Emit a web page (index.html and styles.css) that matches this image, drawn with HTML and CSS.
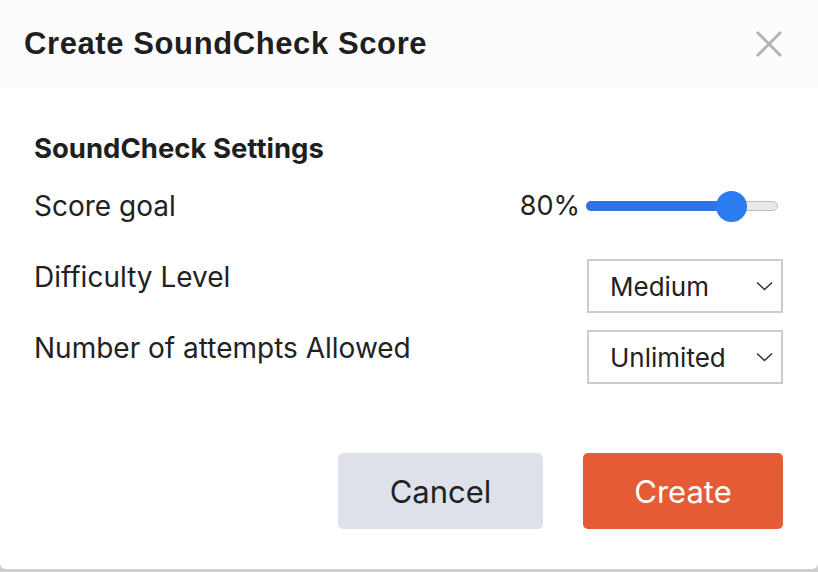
FILE: index.html
```html
<!DOCTYPE html>
<html lang="en">
<head>
<meta charset="utf-8">
<title>Create SoundCheck Score</title>
<link rel="stylesheet" href="styles.css">
</head>
<body>
<div class="dialog">
  <div class="header">
    <h1 class="title">Create SoundCheck Score</h1>
    <button class="close" aria-label="Close">
      <svg width="28" height="28" viewBox="0 0 28 28"><path d="M2 2 L26 26 M26 2 L2 26" stroke="#b3b3b3" stroke-width="3" fill="none"/></svg>
    </button>
  </div>
  <div class="content">
    <h2 class="section-title">SoundCheck Settings</h2>
    <div class="row row-slider">
      <span class="label">Score goal</span>
      <div class="slider-wrap">
        <span class="value">80%</span>
        <div class="track">
          <div class="fill" style="width: 76%"></div>
          <div class="thumb" style="left: 76%"></div>
        </div>
      </div>
    </div>
    <div class="row">
      <span class="label">Difficulty Level</span>
      <div class="select"><span>Medium</span>
        <svg class="chev" width="17" height="10" viewBox="0 0 17 10"><path d="M1 1.5 L8.5 8.5 L16 1.5" stroke="#333" stroke-width="1.5" fill="none"/></svg>
      </div>
    </div>
    <div class="row">
      <span class="label">Number of attempts Allowed</span>
      <div class="select"><span>Unlimited</span>
        <svg class="chev" width="17" height="10" viewBox="0 0 17 10"><path d="M1 1.5 L8.5 8.5 L16 1.5" stroke="#333" stroke-width="1.5" fill="none"/></svg>
      </div>
    </div>
    <div class="actions">
      <button class="btn btn-cancel">Cancel</button>
      <button class="btn btn-create">Create</button>
    </div>
  </div>
</div>
</body>
</html>
```
FILE: styles.css
```css
html, body {
  margin: 0;
  padding: 0;
}
body {
  background: #cfcfcf;
  width: 818px;
  height: 572px;
  overflow: hidden;
  font-family: Inter, "Open Sans", sans-serif;
  color: #222;
}
.dialog {
  height: 569px;
  background: #fff;
  border-radius: 0 0 6px 6px;
  overflow: hidden;
}
.header {
  height: 88px;
  background: #fcfcfc;
  display: flex;
  align-items: center;
  justify-content: space-between;
  padding: 0 35px 0 24px;
}
.title {
  margin: 0;
  font-family: "Liberation Sans", Arial, sans-serif;
  font-weight: bold;
  font-size: 31px;
  color: #1f1f1f;
  letter-spacing: 0.6px;
}
.close {
  border: 0;
  background: none;
  padding: 0;
  width: 28px;
  height: 28px;
  display: flex;
}
.content {
  padding: 43px 35px 0 34px;
}
.section-title {
  margin: 0 0 24px;
  font-size: 27.5px;
  font-weight: 700;
  line-height: 34px;
  color: #1f1f1f;
}
.row {
  display: flex;
  justify-content: space-between;
  align-items: flex-start;
  margin-bottom: 17px;
}
.label {
  font-size: 28px;
  line-height: 34px;
  padding-top: 1px;
  color: #222;
}
.row-slider {
  align-items: center;
  height: 34px;
  margin-bottom: 36px;
}
.row-slider .label {
  padding-top: 0;
}
.slider-wrap {
  display: flex;
  align-items: center;
  gap: 6px;
  margin-right: 5px;
}
.value {
  font-size: 27px;
  line-height: 34px;
}
.track {
  position: relative;
  width: 190px;
  height: 8px;
  background: #e9e9e9;
  border: 1px solid #bdbdbd;
  border-radius: 5px;
}
.fill {
  position: absolute;
  left: -1px;
  top: -1px;
  bottom: -1px;
  background: #2f74e2;
  border-radius: 5px;
}
.thumb {
  position: absolute;
  top: 50%;
  width: 31px;
  height: 31px;
  margin: -15.5px 0 0 -15.5px;
  border-radius: 50%;
  background: #2c7bf0;
}
.select {
  width: 163px;
  height: 50px;
  border: 2px solid #cccccc;
  display: flex;
  align-items: center;
  justify-content: space-between;
  padding: 0 8px 0 21px;
  font-size: 26px;
  color: #222;
}
.chev {
  display: block;
}
.actions {
  display: flex;
  justify-content: flex-end;
  gap: 40px;
  margin-top: 69px;
}
.btn {
  font-family: Inter, "Open Sans", sans-serif;
  font-size: 31px;
  border: 0;
  border-radius: 5px;
  height: 76px;
  width: 205px;
}
.btn-cancel {
  background: #dfe1ea;
  color: #222;
}
.btn-create {
  background: #e55b36;
  color: #fff;
  width: 200px;
}
```
